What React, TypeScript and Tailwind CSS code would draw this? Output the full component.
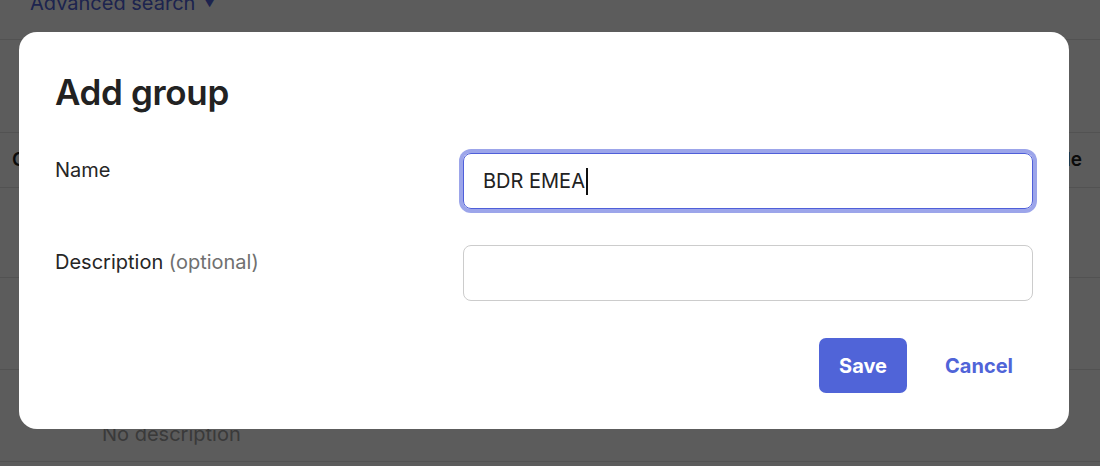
import React from 'react';

const font = "font-['Inter','Liberation_Sans',sans-serif]";

const Page: React.FC = () => {
  return (
    <div className="flex flex-col">
      <div className="h-[40px] border-b border-[#e4e4e4] px-[30px]">
        <div className="-mt-[11px] flex items-center gap-2 text-[20px] leading-[28px] text-[#5063d9]">
          Advanced search <span className="text-[12px]">▼</span>
        </div>
      </div>
      <div className="h-[93px] border-b border-[#e4e4e4]" />
      <div className="flex h-[55px] items-center justify-between border-b border-[#e4e4e4] pl-[12px] pr-[18px] text-[19px] font-semibold text-[#1f1f1f]">
        <span>Category</span>
        <span>Role</span>
      </div>
      <div className="h-[90px] border-b border-[#e4e4e4]" />
      <div className="h-[92px] border-b border-[#e4e4e4]" />
      <div className="flex h-[92px] flex-col border-b border-[#e4e4e4] pl-[102px] pt-[22px] text-[20px] leading-[28px]">
        <span className="text-[#222]">Sales team</span>
        <span className="text-[#a0a0a0]">No description</span>
      </div>
    </div>
  );
};

const Field: React.FC<{ label: React.ReactNode; children: React.ReactNode }> = ({ label, children }) => (
  <div className="flex items-start">
    <div className="w-[408px] pt-[3px] text-[20px] leading-[28px] text-[#262626]">{label}</div>
    {children}
  </div>
);

const App: React.FC = () => {
  return (
    <div className={`relative h-[466px] w-[1100px] overflow-hidden bg-white ${font}`}>
      <Page />
      <div className="absolute inset-0 bg-black/[0.64] pl-[19px] pt-[32px]">
        <div className="w-[1050px] rounded-[18px] bg-white px-9 pb-9 pt-[38px]">
          <h2 className="text-[35px] font-semibold leading-[44px] tracking-[-0.01em] text-[#222]">
            Add group
          </h2>
          <div className="mt-[39px] flex flex-col gap-9">
            <Field label="Name">
              <div className="flex h-[56px] w-[570px] items-center rounded-[8px] border border-[#4f5fd9] px-[19px] text-[20px] text-[#222] ring-4 ring-[#9ca5ea]">
                BDR EMEA
                <span className="ml-[1px] h-[27px] w-[2px] bg-[#111]" />
              </div>
            </Field>
            <Field
              label={
                <>
                  Description <span className="text-[#707070]">(optional)</span>
                </>
              }
            >
              <div className="h-[56px] w-[570px] rounded-[8px] border border-[#cccccc]" />
            </Field>
          </div>
          <div className="mt-[37px] flex justify-end gap-[18px]">
            <button className="h-[55px] rounded-[7px] bg-[#5064d8] px-5 text-[20px] font-bold text-white">
              Save
            </button>
            <button className="h-[55px] px-5 text-[20px] font-bold text-[#5064d8]">Cancel</button>
          </div>
        </div>
      </div>
    </div>
  );
};

export default App;
